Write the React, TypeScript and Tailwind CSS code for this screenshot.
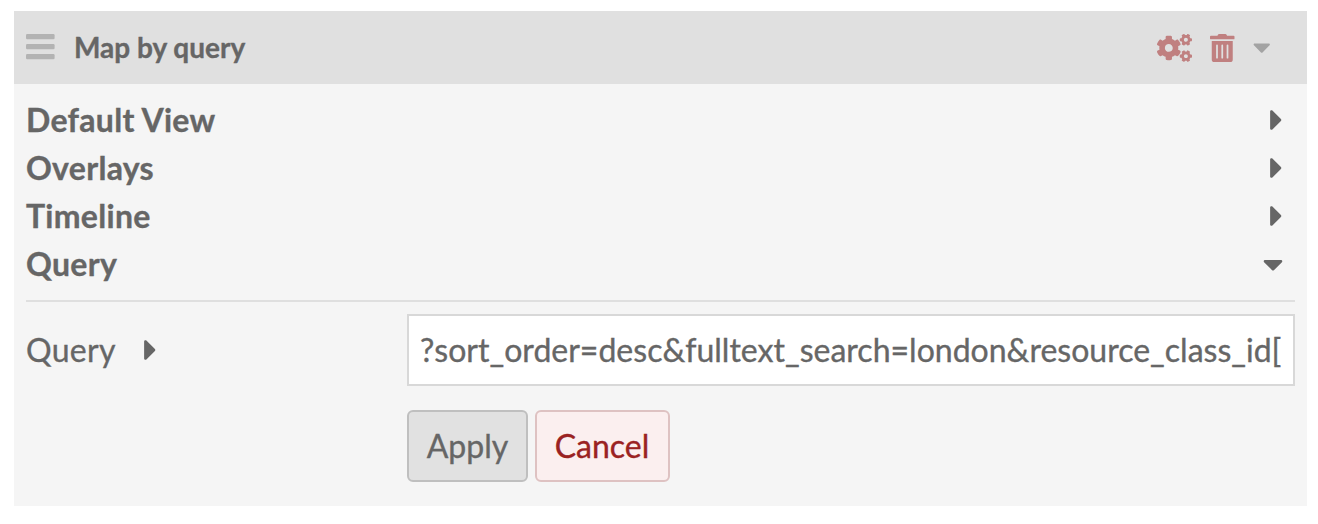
import { FaCaretDown, FaCaretRight, FaCogs, FaTrashAlt } from "react-icons/fa";

const sections = [
  { name: "Default View", open: false },
  { name: "Overlays", open: false },
  { name: "Timeline", open: false },
  { name: "Query", open: true },
];

export default function App() {
  return (
    <div className="h-[524px] bg-white pt-[11px] pr-[11px] pl-[14px] font-['Lato',sans-serif] text-[#666] [-webkit-text-stroke:0.35px]">
      <div className="h-[495px] bg-[#f5f5f5]">
        <header className="flex h-[73px] items-center bg-[#e0e0e0] pr-[37px] pl-3">
          <svg className="mb-px h-[26px] w-[29px] text-[#b3b3b3]" viewBox="0 0 29 26" fill="currentColor">
            <rect width="28.6" height="5.2" rx="1.2" />
            <rect y="10" width="28.6" height="5.2" rx="1.2" />
            <rect y="20" width="28.6" height="5.2" rx="1.2" />
          </svg>
          <h1 className="mb-[2px] ml-[19px] text-[28px] font-bold">Map by query</h1>
          <div className="ml-auto flex items-center text-[#c08080]">
            <FaCogs className="h-7 w-[35px]" />
            <FaTrashAlt className="ml-[18px] h-7 w-[24.5px]" />
            <FaCaretDown className="mb-px ml-[18px] h-7 w-[17.5px] text-[#a3a3a3]" />
          </div>
        </header>
        <div className="px-3 pt-3">
          {sections.map((s) => (
            <div key={s.name} className="flex h-12 items-center justify-between pr-3">
              <h2 className="text-[32px] leading-[48px] font-bold tracking-[0.29px]">{s.name}</h2>
              {s.open ? <FaCaretDown className="mb-px h-8 w-5" /> : <FaCaretRight className="h-[34px] w-[13px]" />}
            </div>
          ))}
          <div className="mt-3 flex h-[86px] items-end border-t-2 border-[#dfdfdf]">
            <div className="flex h-[72px] w-[381px] items-center text-[32px] tracking-[0.3px]">
              Query <FaCaretRight className="ml-7 h-[34px] w-[13px]" />
            </div>
            <div className="flex h-[72px] flex-1 items-center overflow-hidden border-2 border-[#d8d8d8] bg-white px-[11px] text-[32px] tracking-[0.01px] whitespace-nowrap">
              ?sort_order=desc&amp;fulltext_search=london&amp;resource_class_id[
            </div>
          </div>
          <div className="mt-6 ml-[381px] flex gap-[7px] text-[32px]">
            <button className="h-[72px] w-[121px] rounded-md border-2 border-[#bfbfbf] bg-[#e1e1e1]">Apply</button>
            <button className="h-[72px] w-[135px] rounded-md border-2 border-[#dec2c2] bg-[#fbefef] pr-px text-[#9a2222]">Cancel</button>
          </div>
        </div>
      </div>
    </div>
  );
}
